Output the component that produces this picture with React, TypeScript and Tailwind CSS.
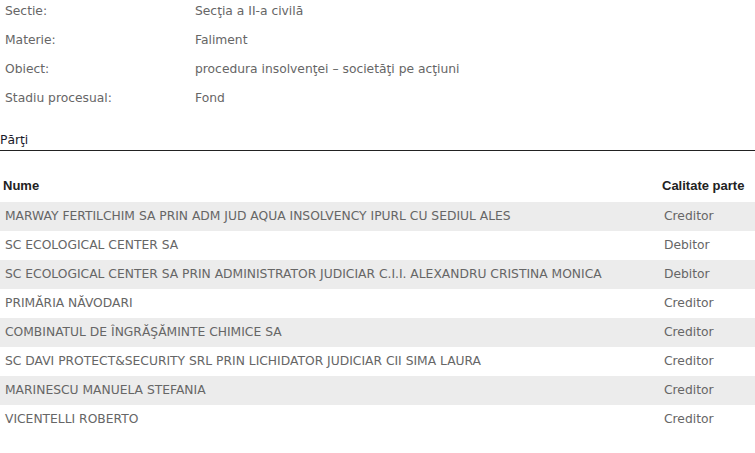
const INFO: { label: string; value: string }[] = [
  { label: "Sectie:", value: "Secţia a II-a civilă" },
  { label: "Materie:", value: "Faliment" },
  { label: "Obiect:", value: "procedura insolvenţei – societăţi pe acţiuni" },
  { label: "Stadiu procesual:", value: "Fond" },
];

const PARTI: { nume: string; calitate: string }[] = [
  { nume: "MARWAY FERTILCHIM SA PRIN ADM JUD AQUA INSOLVENCY IPURL CU SEDIUL ALES", calitate: "Creditor" },
  { nume: "SC ECOLOGICAL CENTER SA", calitate: "Debitor" },
  { nume: "SC ECOLOGICAL CENTER SA PRIN ADMINISTRATOR JUDICIAR C.I.I. ALEXANDRU CRISTINA MONICA", calitate: "Debitor" },
  { nume: "PRIMĂRIA NĂVODARI", calitate: "Creditor" },
  { nume: "COMBINATUL DE ÎNGRĂŞĂMINTE CHIMICE SA", calitate: "Creditor" },
  { nume: "SC DAVI PROTECT&SECURITY SRL PRIN LICHIDATOR JUDICIAR CII SIMA LAURA", calitate: "Creditor" },
  { nume: "MARINESCU MANUELA STEFANIA", calitate: "Creditor" },
  { nume: "VICENTELLI ROBERTO", calitate: "Creditor" },
];

export default function App() {
  return (
    <div className="w-[755px] h-[453px] overflow-hidden bg-white font-['DejaVu_Sans',sans-serif] text-[12.3px] text-[#666]">
      {/* Detalii dosar */}
      <div className="-mt-[3px] flex flex-col">
        {INFO.map((row) => (
          <div key={row.label} className="h-[29px] flex items-center">
            <div className="w-[195px] pl-[5px] shrink-0">{row.label}</div>
            <div>{row.value}</div>
          </div>
        ))}
      </div>

      {/* Părţi */}
      <div className="mt-[18px] h-[20px] flex items-center text-[#1a1a2a] border-b border-[#222] pb-[1px]">
        Părţi
      </div>

      <table className="w-full mt-[19px] border-collapse">
        <thead>
          <tr className="h-[32px] font-['Liberation_Sans',Arial,sans-serif] font-bold text-[13px] text-[#222]">
            <th className="text-left pl-[3px] align-middle">Nume</th>
            <th className="text-left w-[93px] align-middle">Calitate parte</th>
          </tr>
        </thead>
        <tbody>
          {PARTI.map((p, i) => (
            <tr key={p.nume} className={`h-[29px] ${i % 2 === 0 ? "bg-[#ececec]" : "bg-white"}`}>
              <td className="pl-[5px] whitespace-nowrap">{p.nume}</td>
              <td className="pl-[2px]">{p.calitate}</td>
            </tr>
          ))}
        </tbody>
      </table>
    </div>
  );
}
